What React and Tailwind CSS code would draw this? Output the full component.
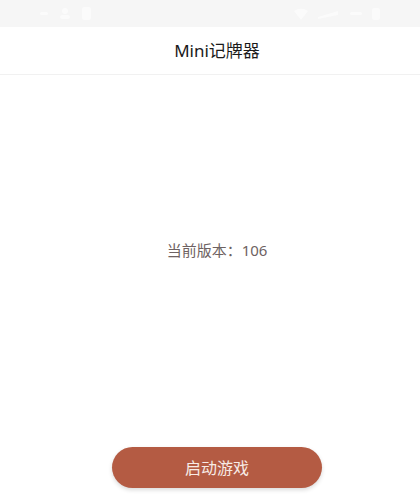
export default function App() {
  return (
    <div className="flex h-[500px] w-[420px] flex-col bg-white font-['Noto_Sans','Noto_Sans_CJK_SC',sans-serif]">
      {/* status bar */}
      <div className="flex h-[27px] items-center justify-between bg-[#f6f6f6] px-[40px]">
        <div className="flex items-center gap-[10px] opacity-60">
          <div className="h-[3px] w-[8px] rounded bg-white" />
          <svg width="14" height="14" viewBox="0 0 14 14" fill="white">
            <circle cx="7" cy="4" r="3" />
            <rect x="2" y="8" width="10" height="4" rx="2" />
          </svg>
          <div className="h-[13px] w-[9px] rounded-[2px] bg-white" />
        </div>
        <div className="flex items-center gap-[10px] opacity-60">
          <svg width="14" height="12" viewBox="0 0 14 12" fill="white">
            <path d="M7 12 L0 3 Q7 -2 14 3 Z" />
          </svg>
          <svg width="22" height="10" viewBox="0 0 22 10" fill="white">
            <path d="M0 8 L20 2 L20 6 L0 10 Z" />
          </svg>
          <div className="h-[3px] w-[12px] rounded bg-white" />
          <div className="h-[12px] w-[8px] rounded-[2px] bg-white" />
        </div>
      </div>

      {/* header */}
      <div className="flex h-[48px] items-center justify-center border-b border-[#f1f1f1] bg-white pl-[14px]">
        <span className="text-[17px] text-[#1a1a1a]">Mini记牌器</span>
      </div>

      {/* body */}
      <div className="flex flex-1 flex-col items-center pl-[14px]">
        <div className="pt-[164px] text-[15px] text-[#6e6262]">当前版本：106</div>
        <div className="flex-1" />
        <button className="mb-[12px] h-[41px] w-[210px] rounded-full bg-[#b45b43] text-[16px] text-[#f7ebe6] shadow-[0_2px_4px_rgba(0,0,0,0.15)]">
          启动游戏
        </button>
      </div>
    </div>
  )
}
